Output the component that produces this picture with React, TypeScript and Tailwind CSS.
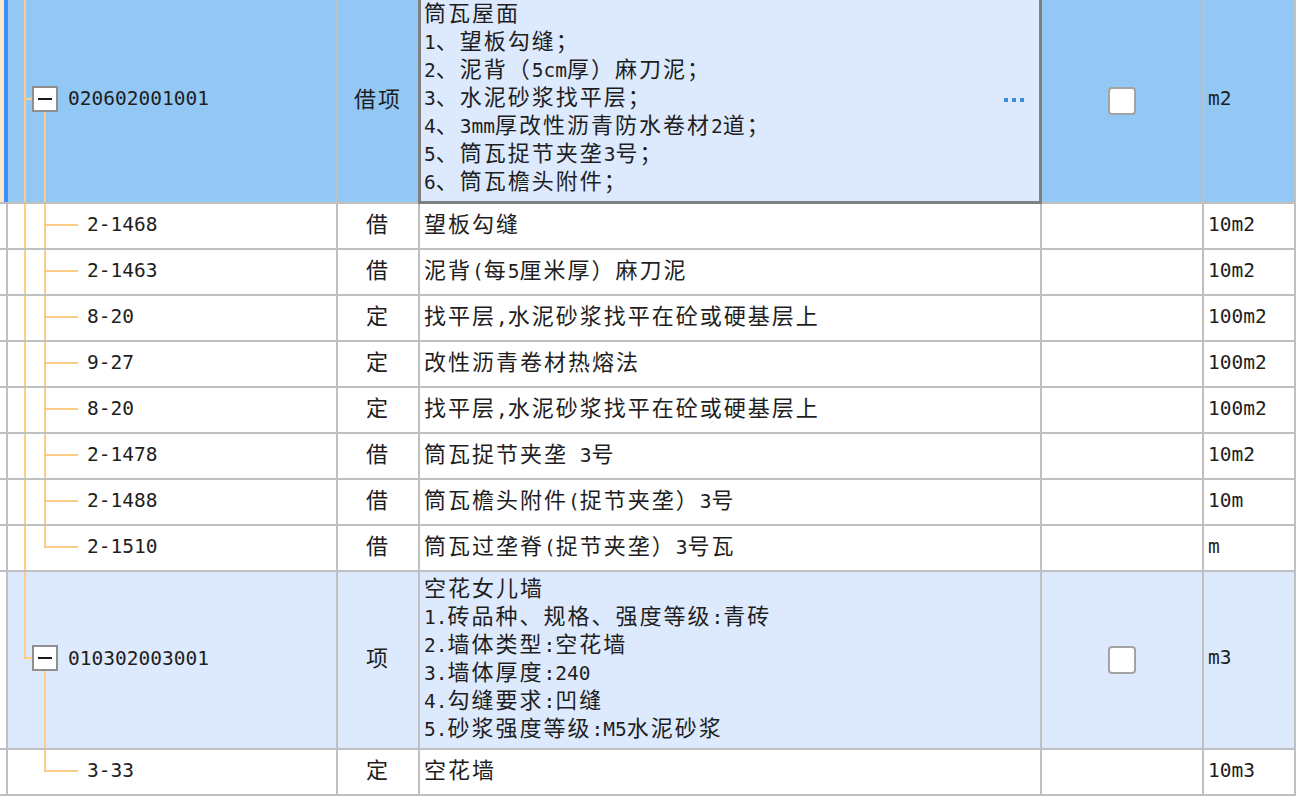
import React from "react";

const ASCII = /^[\x20-\x7E]+$/;

function Txt({ s }: { s: string }) {
  const parts = s.split(/([\x20-\x7E]+)/).filter((p) => p.length > 0);
  return (
    <>
      {parts.map((p, i) =>
        ASCII.test(p) ? (
          <span
            key={i}
            className="font-['DejaVu_Sans_Mono','Liberation_Mono',monospace] text-[19.5px] whitespace-pre"
          >
            {p}
          </span>
        ) : (
          <span
            key={i}
            className="font-['Noto_Sans_CJK_SC','Noto_Sans',sans-serif] text-[22px] tracking-[2px]"
          >
            {p}
          </span>
        )
      )}
    </>
  );
}

const lineV = "absolute w-[2px] bg-[#ffcc88]";
const lineH = "absolute h-[2px] bg-[#ffcc88]";

function MinusBox() {
  return (
    <div className="absolute left-[24px] top-[calc(50%-15px)] w-[26px] h-[26px] border-2 border-[#8f8f8f] bg-white flex items-center justify-center">
      <div className="w-[14px] h-[2px] bg-[#1a1a1a]" />
    </div>
  );
}

function Checkbox() {
  return <div className="w-[28px] h-[28px] rounded-[4px] border-2 border-[#a3a3a3] bg-white" />;
}

const cellBorder = "border-r-2 border-b-2 border-[#c0c0c0]";
const textColor = "text-[#1e1e1e]";

function LeftCol({ selected }: { selected?: boolean }) {
  if (selected) {
    return (
      <div className="w-[8px] shrink-0 flex border-b-2 border-[#c0c0c0]">
        <div className="w-[4px] bg-[#fde7d0]" />
        <div className="w-[4px] bg-[#3d8ef8]" />
      </div>
    );
  }
  return <div className={`w-[8px] shrink-0 bg-white ${cellBorder}`} />;
}

type ChildRow = { code: string; type: string; name: string; unit: string };

const children1: ChildRow[] = [
  { code: "2-1468", type: "借", name: "望板勾缝", unit: "10m2" },
  { code: "2-1463", type: "借", name: "泥背(每5厘米厚）麻刀泥", unit: "10m2" },
  { code: "8-20", type: "定", name: "找平层,水泥砂浆找平在砼或硬基层上", unit: "100m2" },
  { code: "9-27", type: "定", name: "改性沥青卷材热熔法", unit: "100m2" },
  { code: "8-20", type: "定", name: "找平层,水泥砂浆找平在砼或硬基层上", unit: "100m2" },
  { code: "2-1478", type: "借", name: "筒瓦捉节夹垄 3号", unit: "10m2" },
  { code: "2-1488", type: "借", name: "筒瓦檐头附件(捉节夹垄）3号", unit: "10m" },
  { code: "2-1510", type: "借", name: "筒瓦过垄脊(捉节夹垄）3号瓦", unit: "m" },
];

function Child({ row, outer, last }: { row: ChildRow; outer: boolean; last: boolean }) {
  return (
    <div className={`flex h-[46px] bg-white ${textColor}`}>
      <LeftCol />
      <div className={`relative w-[330px] shrink-0 ${cellBorder} flex items-center pl-[79px]`}>
        {outer && <div className={`${lineV} left-[16px] top-0 bottom-0`} />}
        {last ? (
          <div className={`${lineV} left-[36px] top-0 h-[22px]`} />
        ) : (
          <div className={`${lineV} left-[36px] top-0 bottom-0`} />
        )}
        <div className={`${lineH} left-[38px] w-[32px] top-[20px]`} />
        <span className="leading-[28px] relative -top-[1px]">
          <Txt s={row.code} />
        </span>
      </div>
      <div className={`w-[82px] shrink-0 ${cellBorder} flex items-center justify-center`}>
        <span className="leading-[28px] relative -top-[2px]">
          <Txt s={row.type} />
        </span>
      </div>
      <div className={`w-[622px] shrink-0 ${cellBorder} flex items-center pl-[4px]`}>
        <span className="leading-[28px] whitespace-nowrap relative -top-[2px]">
          <Txt s={row.name} />
        </span>
      </div>
      <div className={`w-[162px] shrink-0 ${cellBorder}`} />
      <div className={`w-[92px] shrink-0 ${cellBorder} flex items-center pl-[4px]`}>
        <span className="leading-[28px] relative -top-[1px]">
          <Txt s={row.unit} />
        </span>
      </div>
    </div>
  );
}

const desc1 = [
  "筒瓦屋面",
  "1、望板勾缝；",
  "2、泥背（5cm厚）麻刀泥；",
  "3、水泥砂浆找平层；",
  "4、3mm厚改性沥青防水卷材2道；",
  "5、筒瓦捉节夹垄3号；",
  "6、筒瓦檐头附件；",
];

const desc2 = [
  "空花女儿墙",
  "1.砖品种、规格、强度等级:青砖",
  "2.墙体类型:空花墙",
  "3.墙体厚度:240",
  "4.勾缝要求:凹缝",
  "5.砂浆强度等级:M5水泥砂浆",
];

function Lines({ lines }: { lines: string[] }) {
  return (
    <div className="flex flex-col">
      {lines.map((l, i) => (
        <div key={i} className="h-[28px] leading-[28px] whitespace-nowrap">
          <Txt s={l} />
        </div>
      ))}
    </div>
  );
}

export default function App() {
  return (
    <div className="w-[1297px] h-[797px] bg-white overflow-hidden">
      {/* Parent 1 (selected) */}
      <div className={`flex h-[204px] ${textColor}`}>
        <LeftCol selected />
        <div className={`relative w-[330px] shrink-0 bg-[#93c8f5] ${cellBorder} flex items-center pl-[60px]`}>
          <div className={`${lineV} left-[16px] top-0 bottom-0`} />
          <div className={`${lineH} left-[18px] w-[6px] top-[calc(50%-3px)]`} />
          <MinusBox />
          <div className={`${lineV} left-[36px] top-[calc(50%+11px)] bottom-0`} />
          <span className="leading-[28px] relative -top-[2px]">
            <Txt s="020602001001" />
          </span>
        </div>
        <div className={`w-[82px] shrink-0 bg-[#93c8f5] ${cellBorder} flex items-center justify-center`}>
          <span className="leading-[28px] relative -top-[2px]">
            <Txt s="借项" />
          </span>
        </div>
        <div className={`relative w-[622px] shrink-0 bg-[#dde9fc] ${cellBorder} flex items-start pl-[4px]`}>
          <div className="relative -top-[3px]">
            <Lines lines={desc1} />
          </div>
          <div className="absolute right-[16px] top-[98px] flex gap-[4px]">
            <div className="w-[4px] h-[4px] bg-[#3f8fd6]" />
            <div className="w-[4px] h-[4px] bg-[#3f8fd6]" />
            <div className="w-[4px] h-[4px] bg-[#3f8fd6]" />
          </div>
          <div className="absolute -left-[2px] -top-[3px] right-[-2px] bottom-[-2px] border-[3px] border-[#808080] pointer-events-none" />
        </div>
        <div className={`w-[162px] shrink-0 bg-[#93c8f5] ${cellBorder} flex items-center justify-center`}>
          <Checkbox />
        </div>
        <div className={`w-[92px] shrink-0 bg-[#93c8f5] ${cellBorder} flex items-center pl-[4px]`}>
          <span className="leading-[28px] relative -top-[2px]">
            <Txt s="m2" />
          </span>
        </div>
      </div>

      {children1.map((r, i) => (
        <Child key={i} row={r} outer={true} last={i === children1.length - 1} />
      ))}

      {/* Parent 2 */}
      <div className={`flex h-[178px] ${textColor}`}>
        <LeftCol />
        <div className={`relative w-[330px] shrink-0 bg-[#dde9fc] ${cellBorder} flex items-center pl-[60px]`}>
          <div className={`${lineV} left-[16px] top-0 h-[calc(50%-1px)]`} />
          <div className={`${lineH} left-[16px] w-[8px] top-[calc(50%-3px)]`} />
          <MinusBox />
          <div className={`${lineV} left-[36px] top-[calc(50%+11px)] bottom-0`} />
          <span className="leading-[28px] relative -top-[1px]">
            <Txt s="010302003001" />
          </span>
        </div>
        <div className={`w-[82px] shrink-0 bg-[#dde9fc] ${cellBorder} flex items-center justify-center`}>
          <span className="leading-[28px] relative -top-[2px]">
            <Txt s="项" />
          </span>
        </div>
        <div className={`w-[622px] shrink-0 bg-[#dde9fc] ${cellBorder} flex items-center pl-[4px]`}>
          <div className="relative -top-[4px]">
            <Lines lines={desc2} />
          </div>
        </div>
        <div className={`w-[162px] shrink-0 bg-[#dde9fc] ${cellBorder} flex items-center justify-center`}>
          <Checkbox />
        </div>
        <div className={`w-[92px] shrink-0 bg-[#dde9fc] ${cellBorder} flex items-center pl-[4px]`}>
          <span className="leading-[28px] relative -top-[2px]">
            <Txt s="m3" />
          </span>
        </div>
      </div>

      <Child row={{ code: "3-33", type: "定", name: "空花墙", unit: "10m3" }} outer={false} last={true} />
    </div>
  );
}
